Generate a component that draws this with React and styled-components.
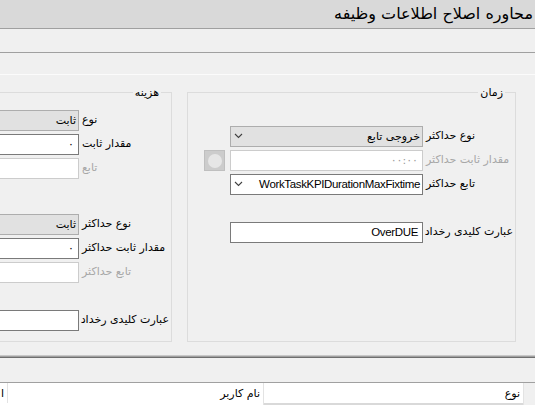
import React from "react";
import styled, { createGlobalStyle } from "styled-components";

const GlobalStyle = createGlobalStyle`
  html, body {
    margin: 0;
    padding: 0;
    width: 535px;
    height: 405px;
    overflow: hidden;
    background: #f0f0f0;
  }
  body {
    font-family: "Liberation Sans", "DejaVu Sans", sans-serif;
    font-size: 11px;
    color: #000;
  }
`;

const Chevron = () => (
  <svg width="9" height="6" viewBox="0 0 9 6">
    <polyline points="1,1 4.5,4.5 8,1" fill="none" stroke="#404040" strokeWidth="1.1" />
  </svg>
);

const timeFields = [
  { label: "نوع حداکثر", kind: "combo", tone: "gray", value: "خروجی تابع" },
  { label: "مقدار ثابت حداکثر", kind: "input", disabled: true, value: "۰۰:۰۰", button: true },
  { label: "تابع حداکثر", kind: "combo", tone: "white", value: "WorkTaskKPIDurationMaxFixtime", latin: true },
  { spacer: 20 },
  { label: "عبارت کلیدی رخداد", kind: "input", value: "OverDUE", latin: true },
];

const costFields = [
  { label: "نوع", kind: "combo", tone: "gray", value: "ثابت", noArrow: true },
  { label: "مقدار ثابت", kind: "input", value: "۰" },
  { label: "تابع", kind: "input", disabled: true, value: "" },
  { spacer: 28 },
  { label: "نوع حداکثر", kind: "combo", tone: "gray", value: "ثابت", noArrow: true },
  { label: "مقدار ثابت حداکثر", kind: "input", value: "۰" },
  { label: "تابع حداکثر", kind: "input", disabled: true, value: "" },
  { spacer: 20 },
  { label: "عبارت کلیدی رخداد", kind: "input", value: "" },
];

const FieldRow = ({ field }) => {
  if (field.spacer) return <Spacer $h={field.spacer} />;
  const value = <Value $latin={field.latin}>{field.value}</Value>;
  return (
    <Row>
      <Label $disabled={field.disabled}>{field.label}</Label>
      {field.kind === "combo" ? (
        <Combo $tone={field.tone}>
          {value}
          {!field.noArrow && <Chevron />}
        </Combo>
      ) : (
        <TextBox $disabled={field.disabled}>{value}</TextBox>
      )}
      {field.button && (
        <PickButton>
          <PickDot />
        </PickButton>
      )}
    </Row>
  );
};

const App = () => {
  return (
    <>
      <GlobalStyle />
      <Window>
        <TitleBar>محاوره اصلاح اطلاعات وظیفه</TitleBar>
        <Strip $h={23} $line="#a0a0a0" />
        <Strip $h={21} $line="#fbfbfb" />
        <Content>
          <Group>
            <Legend>زمان</Legend>
            <Fields $top={27}>
              {timeFields.map((f, i) => (
                <FieldRow key={i} field={f} />
              ))}
            </Fields>
          </Group>
          <Group>
            <Legend>هزینه</Legend>
            <Fields $top={11}>
              {costFields.map((f, i) => (
                <FieldRow key={i} field={f} />
              ))}
            </Fields>
          </Group>
        </Content>
        <Splitter />
        <Strip $h={24} $line="#a0a0a0" />
        <HeaderRow>
          <RowHead />
          <HeadCell $w={260}>نوع</HeadCell>
          <HeadCell $w={256}>نام کاربر</HeadCell>
          <HeadCell $w={8}>ا</HeadCell>
        </HeaderRow>
        <DataRow>
          <RowHead />
          <DataCell $w={260} $selected />
          <DataCell $w={256} />
        </DataRow>
      </Window>
    </>
  );
};

export default App;

const Window = styled.div`
  display: flex;
  flex-direction: column;
  width: 535px;
  height: 405px;
  direction: rtl;
  overflow: hidden;
  background: #f0f0f0;
`;

const TitleBar = styled.div`
  height: 29px;
  flex-shrink: 0;
  display: flex;
  align-items: center;
  padding: 0 2px 1px 0;
  box-sizing: border-box;
  background: #d9d9d9;
  border-bottom: 1px solid #a0a0a0;
  font-family: "DejaVu Sans", sans-serif;
  font-size: 16px;
`;

const Strip = styled.div`
  flex-shrink: 0;
  height: ${(p) => p.$h}px;
  background: #f0f0f0;
  border-bottom: 1px solid ${(p) => p.$line};
`;

const Content = styled.div`
  flex-shrink: 0;
  height: 280px;
  display: flex;
  align-items: flex-start;
  gap: 15px;
  padding: 11px 19px 0 0;
  box-sizing: border-box;
  overflow: hidden;
`;

const Group = styled.fieldset`
  flex-shrink: 0;
  width: 329px;
  height: 256px;
  box-sizing: border-box;
  margin: 0;
  padding: 0 2px 0 0;
  min-width: 0;
  border: 1px solid #dcdcdc;
`;

const Legend = styled.legend`
  margin-right: 8px;
  padding: 0 2px;
  font-family: "DejaVu Sans", sans-serif;
  font-size: 11px;
  line-height: 13px;
`;

const Fields = styled.div`
  display: flex;
  flex-direction: column;
  gap: 4px;
  padding-top: ${(p) => p.$top}px;
`;

const Spacer = styled.div`
  height: ${(p) => p.$h}px;
`;

const Row = styled.div`
  display: flex;
  align-items: flex-start;
  gap: 2px;
  height: 20px;
`;

/* labels hug the control they describe */
const Label = styled.div`
  width: 88px;
  flex-shrink: 0;
  box-sizing: border-box;
  padding: 3px 0 0 1px;
  text-align: left;
  font-family: "DejaVu Sans", sans-serif;
  font-size: 11px;
  white-space: nowrap;
  color: ${(p) => (p.$disabled ? "#a7a7a7" : "#000")};
`;

const Value = styled.span`
  font-family: ${(p) => (p.$latin ? `"Liberation Sans", sans-serif` : `"DejaVu Sans", sans-serif`)};
  font-size: ${(p) => (p.$latin ? "11.5px" : "11px")};
  letter-spacing: ${(p) => (p.$latin ? "-0.35px" : "0")};
  white-space: nowrap;
`;

const Combo = styled.div`
  width: 193px;
  height: 21px;
  flex-shrink: 0;
  box-sizing: border-box;
  display: flex;
  align-items: center;
  justify-content: space-between;
  padding: 0 2px 1px 3px;
  background: ${(p) => (p.$tone === "gray" ? "#e1e1e1" : "#fff")};
  border: 1px solid ${(p) => (p.$tone === "gray" ? "#adadad" : "#7a7a7a")};
`;

const TextBox = styled.div`
  width: 193px;
  height: 21px;
  flex-shrink: 0;
  box-sizing: border-box;
  display: flex;
  align-items: center;
  padding: 0 4px 1px;
  background: #fff;
  border: 1px solid ${(p) => (p.$disabled ? "#cccccc" : "#7a7a7a")};
  color: ${(p) => (p.$disabled ? "#9a9a9a" : "#000")};
`;

const PickButton = styled.div`
  width: 21px;
  height: 21px;
  flex-shrink: 0;
  margin-right: 3px;
  box-sizing: border-box;
  display: flex;
  align-items: center;
  justify-content: center;
  background: #cccccc;
  border: 1px solid #bfbfbf;
`;

const PickDot = styled.div`
  width: 14px;
  height: 14px;
  border-radius: 50%;
  background: #e6e6e6;
`;

const Splitter = styled.div`
  flex-shrink: 0;
  height: 1px;
  background: #a0a0a0;
  border-top: 1px solid #c8c8c8;
  border-bottom: 1px solid #6e6e6e;
`;

const HeaderRow = styled.div`
  flex-shrink: 0;
  display: flex;
  height: 20px;
  background: #fff;
`;

const RowHead = styled.div`
  width: 11px;
  flex-shrink: 0;
  background: #f0f0f0;
`;

const HeadCell = styled.div`
  width: ${(p) => p.$w}px;
  flex-shrink: 0;
  box-sizing: border-box;
  display: flex;
  align-items: center;
  padding: 0 3px 0 0;
  border-right: 1px solid #e3e3e3;
  font-family: "DejaVu Sans", sans-serif;
  font-size: 11px;
  white-space: nowrap;
  overflow: hidden;
`;

const DataRow = styled.div`
  flex-shrink: 0;
  display: flex;
  height: 20px;
  background: #fff;
`;

const DataCell = styled.div`
  width: ${(p) => p.$w}px;
  flex-shrink: 0;
  box-sizing: border-box;
  border-right: 1px solid #e3e3e3;
  background: ${(p) => (p.$selected ? "#d9d9d9" : "#fff")};
`;
